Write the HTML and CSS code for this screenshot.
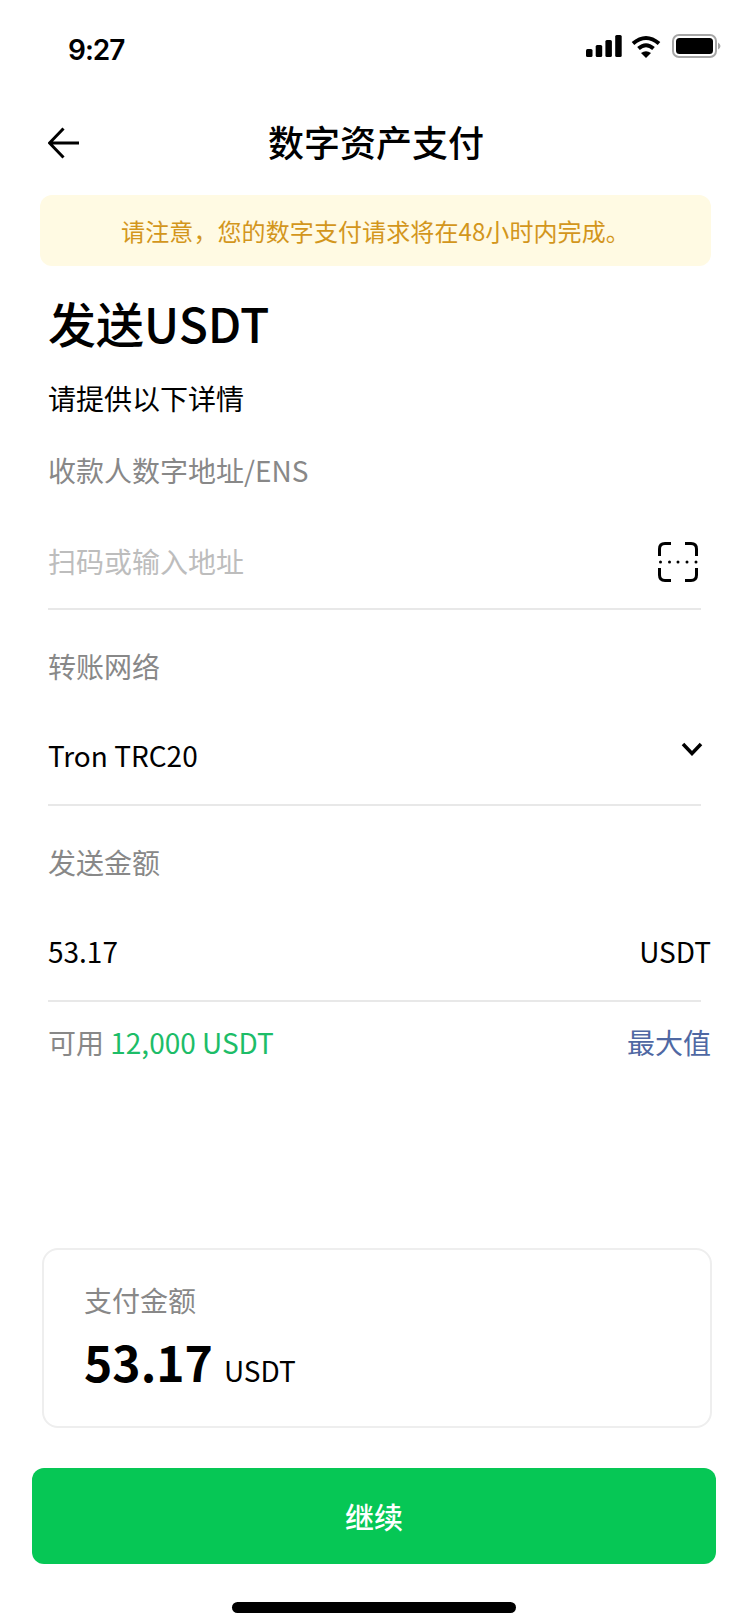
FILE: index.html
```html
<!DOCTYPE html>
<html lang="zh-CN">
<head>
    <meta charset="UTF-8">
    <meta name="viewport" content="width=device-width, initial-scale=1.0">
    <title>数字资产支付</title>
    <link rel="stylesheet" href="styles.css">
</head>
<body>
    <div class="page">
        <div class="status-bar">
            <span class="time">9:27</span>
            <div class="status-icons">
                <svg class="icon-signal" width="36" height="22" viewBox="0 0 36 22">
                    <rect x="0" y="14" width="6.5" height="8" rx="1.5"/>
                    <rect x="9.7" y="10" width="6.5" height="12" rx="1.5"/>
                    <rect x="19.4" y="5" width="6.5" height="17" rx="1.5"/>
                    <rect x="29.2" y="0" width="6.5" height="22" rx="1.5"/>
                </svg>
                <svg class="icon-wifi" width="30" height="23" viewBox="0 0 30 23">
                    <path d="M2 8.5 Q15 -2.5 28 8.5" fill="none" stroke="#000" stroke-width="4"/>
                    <path d="M7.5 13.5 Q15 7 22.5 13.5" fill="none" stroke="#000" stroke-width="4"/>
                    <path d="M10 18 Q15 14.5 20 18 L15 23 Z"/>
                </svg>
                <svg class="icon-battery" width="49" height="24" viewBox="0 0 49 24">
                    <rect x="1" y="1" width="43" height="22" rx="6" fill="none" stroke="#a6a6a6" stroke-width="2"/>
                    <rect x="4" y="4" width="37" height="16" rx="3.5"/>
                    <path d="M46 8.5 Q48.500 10 48.500 12 Q48.500 14 46 15.500 Z" fill="#a6a6a6"/>
                </svg>
            </div>
        </div>

        <div class="nav">
            <svg class="icon-back" width="32" height="32" viewBox="0 0 32 32">
                <path d="M15.500 1.500 L1.500 16 L15.500 30.500 M1.500 16 H31" fill="none" stroke="#000" stroke-width="3"/>
            </svg>
            <h1 class="nav-title">数字资产支付</h1>
        </div>

        <div class="notice">请注意，您的数字支付请求将在48小时内完成。</div>

        <h2 class="heading">发送USDT</h2>
        <p class="subheading">请提供以下详情</p>

        <div class="field">
            <div class="field-label">收款人数字地址/ENS</div>
            <div class="field-row">
                <span class="placeholder">扫码或输入地址</span>
                <svg class="icon-scan" width="40" height="40" viewBox="0 0 40 40">
                    <path d="M1.500 14 V7 Q1.500 1.500 7 1.500 H13 M27 1.500 H33 Q38.500 1.500 38.500 7 V14 M38.500 26 V33 Q38.500 38.500 33 38.500 H27 M13 38.500 H7 Q1.500 38.500 1.500 33 V26" fill="none" stroke="#000" stroke-width="3"/>
                    <circle cx="2.500" cy="20" r="1.500"/>
                    <circle cx="11.500" cy="20" r="1.500"/>
                    <circle cx="20" cy="20" r="1.500"/>
                    <circle cx="29" cy="20" r="1.500"/>
                    <circle cx="38" cy="20" r="1.500"/>
                </svg>
            </div>
        </div>

        <div class="field">
            <div class="field-label">转账网络</div>
            <div class="field-row field-row-latin">
                <span>Tron TRC20</span>
                <svg class="icon-chevron" width="22" height="14" viewBox="0 0 22 14">
                    <path d="M2 2 L11 11.500 L20 2" fill="none" stroke="#000" stroke-width="3.500"/>
                </svg>
            </div>
        </div>

        <div class="field">
            <div class="field-label">发送金额</div>
            <div class="field-row field-row-latin field-row-wide">
                <span>53.17</span>
                <span>USDT</span>
            </div>
        </div>

        <div class="balance">
            <span class="balance-text">可用 <span class="balance-value">12,000 USDT</span></span>
            <span class="balance-max">最大值</span>
        </div>

        <div class="pay-card">
            <div class="pay-label">支付金额</div>
            <div class="pay-amount"><strong>53.17</strong><span>USDT</span></div>
        </div>

        <button class="continue-btn">继续</button>
        <div class="home-bar"></div>
    </div>
</body>
</html>
```
FILE: styles.css
```css
* {
    box-sizing: border-box;
}
body {
    margin: 0;
    background: #fff;
    color: #000;
    font-family: "Noto Sans CJK SC", "Noto Sans", sans-serif;
}
.page {
    display: flex;
    flex-direction: column;
    width: 750px;
    height: 1624px;
    overflow: hidden;
}
.status-bar {
    display: flex;
    justify-content: space-between;
    align-items: center;
    height: 98px;
    padding: 2px 29px 0 68px;
}
.time {
    font-family: Inter, sans-serif;
    font-size: 28px;
    font-weight: 600;
    letter-spacing: -1px;
}
.status-icons {
    display: flex;
    align-items: center;
    gap: 11px;
    margin-bottom: 8px;
}
.icon-signal {
    margin-right: -2px;
}
.nav {
    display: flex;
    justify-content: center;
    align-items: center;
    position: relative;
    height: 72px;
    margin: 7px 0 18px;
    padding-left: 2px;
}
.icon-back {
    position: absolute;
    left: 48px;
    top: 22px;
}
.nav-title {
    margin: 0;
    font-size: 36px;
    font-weight: 500;
    line-height: 72px;
}
.notice {
    margin: 0 39px 0 40px;
    height: 71px;
    border-radius: 12px;
    background: #fffae3;
    color: #d3961c;
    font-size: 24px;
    letter-spacing: 0.1px;
    line-height: 71px;
    text-align: center;
}
.heading {
    margin: 26px 0 0 48px;
    font-size: 48px;
    font-weight: 500;
    line-height: 60px;
}
.subheading {
    margin: 26px 0 32px 48px;
    font-size: 28px;
    line-height: 40px;
}
.field {
    width: 653px;
    margin: 0 0 36px 48px;
    padding-bottom: 28px;
    border-bottom: 2px solid #e8e8e8;
}
.field-label {
    color: #888;
    font-size: 28px;
    line-height: 40px;
}
.field-row {
    display: flex;
    justify-content: space-between;
    align-items: center;
    height: 40px;
    margin-top: 50px;
    font-size: 28px;
    line-height: 38px;
}
.field-row-latin {
    padding-bottom: 2px;
}
.field-row-wide {
    margin-right: -10px;
}
.placeholder {
    margin-top: 2px;
    color: #bdbdbd;
}
.icon-scan {
    margin: 4px 3px 0 0;
}
.icon-chevron {
    margin: 0 -2px 12px 0;
}
.balance {
    display: flex;
    justify-content: space-between;
    margin: -16px 39px 0 48px;
    font-size: 28px;
    line-height: 40px;
}
.balance-text {
    color: #888;
}
.balance-value {
    color: #1dbd68;
}
.balance-max {
    color: #4f68a3;
}
.pay-card {
    width: 670px;
    height: 180px;
    margin: auto 0 40px 42px;
    padding: 30px 40px 0;
    border: 2px solid #eee;
    border-radius: 16px;
}
.pay-label {
    color: #888;
    font-size: 28px;
    line-height: 40px;
}
.pay-amount {
    display: flex;
    align-items: baseline;
    gap: 11px;
    margin-top: 11px;
    font-size: 28px;
    line-height: 60px;
}
.pay-amount strong {
    font-size: 48px;
    font-weight: 700;
}
.continue-btn {
    display: block;
    width: 684px;
    height: 96px;
    margin-left: 32px;
    border: none;
    border-radius: 12px;
    background: #06c755;
    color: #fff;
    font-family: inherit;
    font-size: 29px;
    font-weight: 500;
}
.home-bar {
    width: 284px;
    height: 11px;
    margin: 38px 0 11px 232px;
    border-radius: 6px;
    background: #000;
}
```
